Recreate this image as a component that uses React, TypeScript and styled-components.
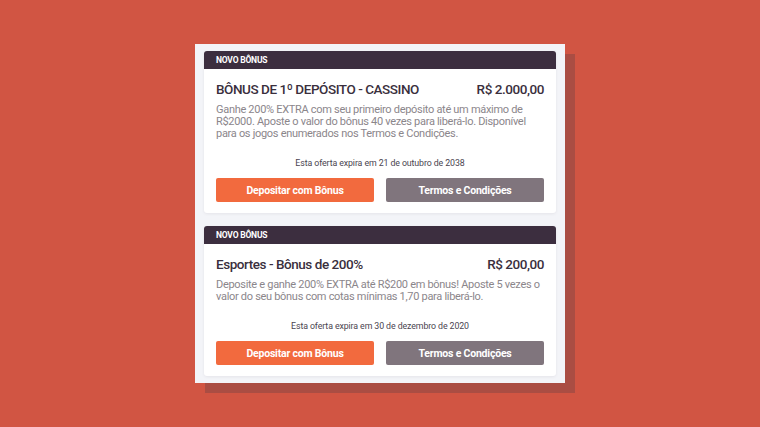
import React from 'react';
import styled, { createGlobalStyle } from 'styled-components';

const GlobalStyle = createGlobalStyle`
  html, body {
    margin: 0;
    padding: 0;
    background: #d15543;
  }
  body {
    font-family: Roboto, "Liberation Sans", sans-serif;
  }
`;

const Page = styled.div`
  width: 760px;
  height: 427px;
  display: flex;
  justify-content: center;
  padding-top: 44px;
  box-sizing: border-box;
`;

const Panel = styled.div`
  width: 370px;
  height: 339px;
  box-sizing: border-box;
  padding: 7px 9px 6px 9px;
  background: #f3f4f8;
  box-shadow: 10px 10px 0 #aa4d43;
  display: flex;
  flex-direction: column;
  gap: 13px;
`;

const Card = styled.div`
  background: #ffffff;
  border-radius: 3px;
  overflow: hidden;
  box-shadow: 0 1px 3px rgba(60, 50, 70, 0.08);
  display: flex;
  flex-direction: column;
`;

const Header = styled.div`
  height: 18px;
  background: #3c2e3f;
  color: #ffffff;
  font-size: 8.5px;
  font-weight: 700;
  line-height: 18px;
  padding-left: 12px;
  letter-spacing: -0.2px;
`;

const Body = styled.div`
  padding: 11px 12px 11px 12px;
  display: flex;
  flex-direction: column;
`;

const TitleRow = styled.div`
  display: flex;
  justify-content: space-between;
  align-items: center;
  color: #3a2f3d;
  font-size: 13.5px;
  font-weight: 500;
  line-height: 18px;
  letter-spacing: -0.45px;
`;

const Description = styled.p<{ $lines: number }>`
  margin: 6px 0 0 0;
  color: #8b868b;
  font-size: 11px;
  line-height: 12px;
  letter-spacing: -0.3px;
  min-height: ${(p) => p.$lines * 12}px;
`;

const Expiry = styled.div`
  margin-top: 17px;
  text-align: center;
  color: #4a4450;
  font-size: 8.8px;
  line-height: 12px;
  letter-spacing: -0.1px;
`;

const Buttons = styled.div`
  margin-top: 9px;
  display: grid;
  grid-template-columns: 1fr 1fr;
  gap: 12px;
`;

const Button = styled.button<{ $variant: 'primary' | 'secondary' }>`
  height: 24px;
  border: none;
  border-radius: 2px;
  background: ${(p) => (p.$variant === 'primary' ? '#f26a3e' : '#80757d')};
  color: #ffffff;
  font-family: Roboto, "Liberation Sans", sans-serif;
  font-size: 10.5px;
  font-weight: 700;
  letter-spacing: -0.2px;
  cursor: pointer;
  padding: 0;
`;

type Offer = {
  title: string;
  amount: string;
  text: string;
  lines: number;
  expires: string;
};

const offers: Offer[] = [
  {
    title: 'BÔNUS DE 1º DEPÓSITO - CASSINO',
    amount: 'R$ 2.000,00',
    text: 'Ganhe 200% EXTRA com seu primeiro depósito até um máximo de R$2000. Aposte o valor do bônus 40 vezes para liberá-lo. Disponível para os jogos enumerados nos Termos e Condições.',
    lines: 3,
    expires: 'Esta oferta expira em 21 de outubro de 2038',
  },
  {
    title: 'Esportes - Bônus de 200%',
    amount: 'R$ 200,00',
    text: 'Deposite e ganhe 200% EXTRA até R$200 em bônus! Aposte 5 vezes o valor do seu bônus com cotas mínimas 1,70 para liberá-lo.',
    lines: 2,
    expires: 'Esta oferta expira em 30 de dezembro de 2020',
  },
];

export default function App() {
  return (
    <>
      <GlobalStyle />
      <Page>
        <Panel>
          {offers.map((o) => (
            <Card key={o.title}>
              <Header>NOVO BÔNUS</Header>
              <Body>
                <TitleRow>
                  <span>{o.title}</span>
                  <span>{o.amount}</span>
                </TitleRow>
                <Description $lines={o.lines}>{o.text}</Description>
                <Expiry>{o.expires}</Expiry>
                <Buttons>
                  <Button $variant="primary">Depositar com Bônus</Button>
                  <Button $variant="secondary">Termos e Condições</Button>
                </Buttons>
              </Body>
            </Card>
          ))}
        </Panel>
      </Page>
    </>
  );
}
